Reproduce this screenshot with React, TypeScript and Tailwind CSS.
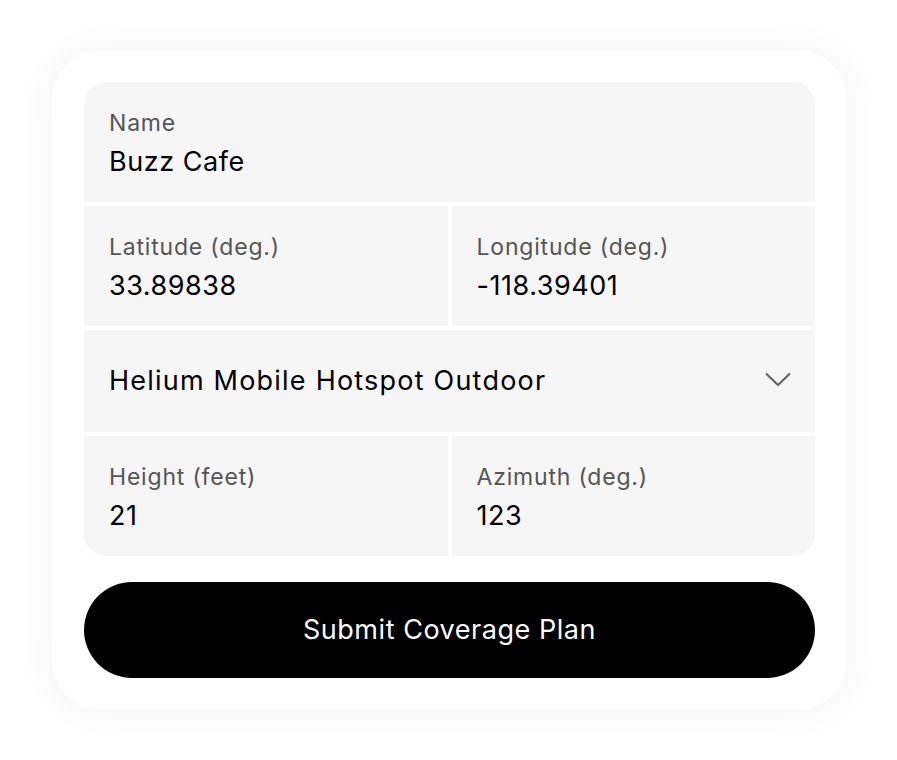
const Field = ({ label, value }: { label: string; value: string }) => (
  <div className="bg-[#f6f6f6] h-[120px] px-[25px] pt-[26px] flex flex-col">
    <span className="text-[23px] leading-[30px] tracking-[0.035em] text-[#555555]">{label}</span>
    <span className="text-[27px] leading-[38px] tracking-[0.02em] text-black mt-[5px]">{value}</span>
  </div>
);

export default function App() {
  return (
    <div className="w-[897px] h-[760px] bg-white flex items-start justify-center pt-[50px] pl-[2px] font-['Inter',sans-serif]">
      <div className="w-[795px] bg-white rounded-[50px] shadow-[0_0_36px_rgba(0,0,0,0.06)] p-[32px] flex flex-col gap-[26px]">
        <div className="rounded-[22px] overflow-hidden flex flex-col gap-[4px] bg-white">
          <Field label="Name" value="Buzz Cafe" />
          <div className="grid grid-cols-2 gap-[4px]">
            <Field label="Latitude (deg.)" value="33.89838" />
            <Field label="Longitude (deg.)" value="-118.39401" />
          </div>
          <div className="bg-[#f6f6f6] h-[102px] pl-[25px] pr-[24px] flex items-center justify-between">
            <span className="text-[27px] tracking-[0.045em] text-black">Helium Mobile Hotspot Outdoor</span>
            <svg width="26" height="15" viewBox="0 0 26 15" fill="none" className="mb-[3px]">
              <polyline points="1,1.5 13,13 25,1.5" stroke="#666666" strokeWidth="2.2" />
            </svg>
          </div>
          <div className="grid grid-cols-2 gap-[4px]">
            <Field label="Height (feet)" value="21" />
            <Field label="Azimuth (deg.)" value="123" />
          </div>
        </div>
        <button className="h-[96px] w-full rounded-full bg-black text-white text-[27px] tracking-[0.02em]">
          Submit Coverage Plan
        </button>
      </div>
    </div>
  );
}
